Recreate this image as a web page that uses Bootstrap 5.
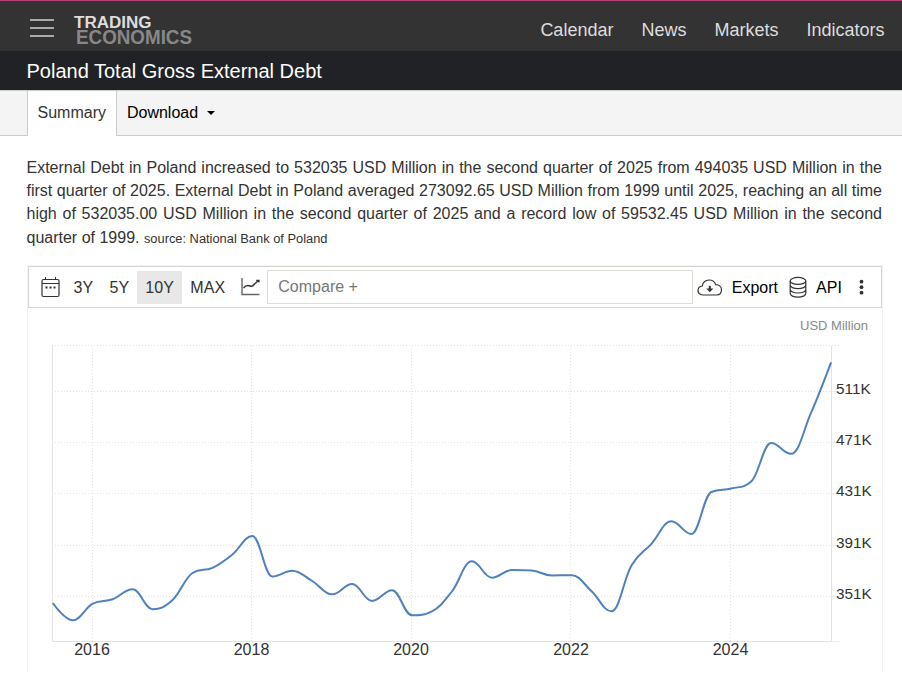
<!DOCTYPE html>
<html lang="en">
<head>
<meta charset="utf-8">
<meta name="viewport" content="width=device-width, initial-scale=1">
<title>Poland Total Gross External Debt</title>
<link href="https://cdn.jsdelivr.net/npm/bootstrap@5.3.0/dist/css/bootstrap.min.css" rel="stylesheet">
<style>
body{font-family:"Liberation Sans",Arial,sans-serif;font-size:16px;color:#333;overflow:hidden}
.topbar{height:51px;background:#333;border-top:1px solid #b5447a;padding:5px 17.5px 0 30px}
.topbar .nav-link{color:#ddd;font-size:18px;line-height:24px;padding:2px 0 0}
.main-links{gap:28px}
.titlebar{height:39px;background:#212226;padding:1px 26.5px 0}
.titlebar h1{font-size:20px;line-height:39px;color:#fff}
.tabbar{height:46px;background:#f4f4f4;border-top:1px solid #ccc;border-bottom:1px solid #ccc;padding-left:27px}
.tabbar .nav-link{height:45px;line-height:22px;padding:11px 10px 0 9.5px;color:#000}
.tabbar .nav-link.active{background:#fff;color:#333;border-left:1px solid #ccc;border-right:1px solid #ccc}
.tabbar .dropdown-toggle{padding-left:10px}
.dropdown-toggle::after{border-top-width:4px;border-left-width:4px;border-right-width:4px;margin-left:8.5px;vertical-align:3px}
.summary{margin:20px 20px 0 26.5px;line-height:23.2px;text-align:justify}
.summary span{font-size:12.85px}
.chart-panel{margin:15.2px 19px 0 27px;border:1px solid #f3f3f3;border-bottom:0;height:407px}
.toolbar{height:42px;border:1px solid #d6d6d6;padding:0 10px 0 11.5px}
.period{height:33px;line-height:34px;padding:0 8px;font-size:16px;letter-spacing:.15px;color:#333;text-decoration:none}
.period.current{background:#e8e8e8}
.compare{width:426px;height:34px;border:1px solid #deded6;border-radius:0;padding:0 10px;font-size:16px;line-height:30px;margin-left:7px}
.compare::placeholder{color:#777}
.tool{color:#000;text-decoration:none}
.tool-name{margin-left:9px;padding-top:1px}
.compare+.tool{margin-left:3.5px}
.tool+.tool{margin-left:11px}
.dots{margin-left:17.5px}
svg text{font-family:"Liberation Sans",Arial,sans-serif}
.plot{display:block}
.plot .axis-label{font-size:15.3px;fill:#333}
.plot .year{font-size:16px;text-anchor:middle;fill:#333}
.plot .grid{stroke:#e3e3e3;stroke-dasharray:1 2;fill:none}
.plot .frame{stroke:#e3e3e3;fill:none}
</style>
<script src="https://cdn.jsdelivr.net/npm/bootstrap@5.3.0/dist/js/bootstrap.bundle.min.js"></script>
</head>
<body class="bg-white">
<header class="topbar d-flex align-items-center">
  <svg width="24" height="20" viewBox="0 0 24 20" stroke="#aaa" stroke-width="1.8" aria-label="Menu"><path d="M0 1H24M0 9H24M0 17H24"/></svg>
  <svg class="ms-3" width="126" height="34" font-weight="700" font-size="17.2">
    <text x="4" y="15.5" fill="#ddd" textLength="77.5" lengthAdjust="spacingAndGlyphs">TRADING</text>
    <text x="6" y="31.5" fill="#888" font-size="19.5" textLength="116" lengthAdjust="spacingAndGlyphs">ECONOMICS</text>
  </svg>
  <nav class="nav main-links ms-auto">
    <a class="nav-link" href="#">Calendar</a><a class="nav-link" href="#">News</a><a class="nav-link" href="#">Markets</a><a class="nav-link" href="#">Indicators</a>
  </nav>
</header>
<div class="titlebar"><h1 class="m-0 fw-normal">Poland Total Gross External Debt</h1></div>
<nav class="nav tabbar">
  <a class="nav-link active" href="#">Summary</a>
  <a class="nav-link dropdown-toggle" href="#">Download</a>
</nav>
<main>
  <p class="summary mb-0">External Debt in Poland increased to 532035 USD Million in the second quarter of 2025 from 494035 USD Million in the first quarter of 2025. External Debt in Poland averaged 273092.65 USD Million from 1999 until 2025, reaching an all time high of 532035.00 USD Million in the second quarter of 2025 and a record low of 59532.45 USD Million in the second quarter of 1999. <span>source: National Bank of Poland</span></p>
  <section class="chart-panel">
    <div class="toolbar d-flex align-items-center">
      <svg width="21" height="22" viewBox="0 0 21 22" fill="none" stroke="#333"><rect x="1" y="3.5" width="17" height="17" rx="1.5" stroke-width="1.2"/><path d="M1 7.5H18M4.5 1V4M14.5 1V4"/><path d="M4.5 11.5H6.5M8.5 11.5H10.5M12.5 11.5H14.5" stroke-width="2"/></svg>
      <div class="d-flex ms-1"><a class="period" href="#">3Y</a><a class="period" href="#">5Y</a><a class="period current" href="#">10Y</a><a class="period" href="#">MAX</a></div>
      <svg class="ms-2" width="19" height="20" viewBox="0 0 19 20" fill="none" stroke="#333"><path d="M1 1V17.5H18.5" stroke="#666" stroke-width="1.4"/><path d="M2.5 11.2C5 7.8 7 8.2 9 9S12 9.3 13.5 7L17.5 3.5M15.2 3.4H17.9V5.5" stroke-width="1.4"/></svg>
      <input class="compare form-control" type="text" placeholder="Compare +" aria-label="Compare">
      <a class="tool d-flex align-items-center" href="#"><svg width="26" height="20" viewBox="0 0 26 20" fill="none" stroke="#333" stroke-width="1.2"><path d="M6 18C2.5 17.7 1 15.7 1 13.6C1 11.2 2.8 9.3 5.3 9C5.4 5.6 8.5 3 12 3C15.2 3 17.8 4.8 18.7 7.7C22.2 7.7 24.5 10 24.5 12.9C24.5 15.6 22.5 17.8 19.6 18Z"/><path d="M12.8 8.8V12" stroke-width="2"/><path d="M9.2 11.5H16.4L12.8 15.2Z" fill="#333" stroke="none"/></svg><span class="tool-name">Export</span></a>
      <a class="tool d-flex align-items-center" href="#"><svg width="18" height="22" viewBox="0 0 18 22" fill="none" stroke="#333" stroke-width="1.2"><ellipse cx="9" cy="4.9" rx="7.8" ry="3.5"/><path d="M1.2 4.9V17.6C1.2 19.6 4.7 21.2 9 21.2S16.8 19.6 16.8 17.6V4.9M1.2 9.1C1.2 11.1 4.7 12.7 9 12.7S16.8 11.1 16.8 9.1M1.2 13.4C1.2 15.4 4.7 17 9 17S16.8 15.4 16.8 13.4"/></svg><span class="tool-name">API</span></a>
      <svg class="dots" width="5" height="16" viewBox="0 0 5 16" fill="#333"><circle cx="2.5" cy="2.7" r="1.9"/><circle cx="2.5" cy="8.2" r="1.9"/><circle cx="2.5" cy="13.7" r="1.9"/></svg>
    </div>
    <svg class="plot" width="854" height="364" viewBox="28 308 854 364">
      <text x="868" y="330" font-size="13.3" fill="#888" text-anchor="end" textLength="68" lengthAdjust="spacingAndGlyphs">USD Million</text>
      <path class="grid" d="M52 345.5H839M52 391.5H831M52 442.5H831M52 493.5H831M52 545.5H831M52 596.5H831M92.5 346V641M251.5 346V641M411.5 346V641M570.5 346V641M730.5 346V641"/>
      <path class="frame" d="M52.5 346V641.5H831.5V346"/>
      <path stroke="#f0f0f0" d="M832 391.5H840M832 442.5H840M832 493.5H840M832 545.5H840M832 596.5H840M832 641.5H840"/>
      <path id="series" fill="none" stroke="#4f81bd" stroke-width="2" stroke-linejoin="round"/>
      <g class="axis-label"><text x="836" y="394">511K</text><text x="836" y="445">471K</text><text x="836" y="496">431K</text><text x="836" y="548">391K</text><text x="836" y="599">351K</text></g>
      <g class="year"><text x="92" y="655">2016</text><text x="251.5" y="655">2018</text><text x="411" y="655">2020</text><text x="571" y="655">2022</text><text x="730.5" y="655">2024</text></g>
    </svg>
  </section>
</main>
<script>
// Quarterly values as plot heights, joined by a smooth spline without overshoot.
const ys=[603,620.3,603.7,599.3,589.3,609.2,600,573,567.8,554.5,536,576.5,570.7,581,594.3,584,601,590.2,615.3,611.3,591.5,561.3,577.7,570,570.5,575.5,575.2,591.3,611.3,565.5,543.8,521.3,534,492,488.5,481.5,443,453.8,412.7,362.3];
const pts=ys.map((y,i)=>({x:52.8+i*19.955,y}));
let d=`M${pts[0].x} ${pts[0].y}`;
pts.forEach((p,i)=>{
  const a=pts[i-1],b=pts[i+1];
  let lx=p.x,ly=p.y;
  if(a&&b){
    lx=(1.5*p.x+a.x)/2.5; ly=(1.5*p.y+a.y)/2.5;
    let rx=(1.5*p.x+b.x)/2.5, ry=(1.5*p.y+b.y)/2.5;
    const c=(ry-ly)*(rx-p.x)/(rx-lx)+p.y-ry;
    ly+=c; ry+=c;
    if(ly>a.y&&ly>p.y){ly=Math.max(a.y,p.y);ry=2*p.y-ly}
    else if(ly<a.y&&ly<p.y){ly=Math.min(a.y,p.y);ry=2*p.y-ly}
    if(ry>b.y&&ry>p.y){ry=Math.max(b.y,p.y);ly=2*p.y-ry}
    else if(ry<b.y&&ry<p.y){ry=Math.min(b.y,p.y);ly=2*p.y-ry}
    p.rx=rx;p.ry=ry;
  }
  if(a)d+=`C${a.rx??a.x} ${a.ry??a.y} ${lx} ${ly} ${p.x} ${p.y}`;
});
document.getElementById('series').setAttribute('d',d);
</script>
</body>
</html>
